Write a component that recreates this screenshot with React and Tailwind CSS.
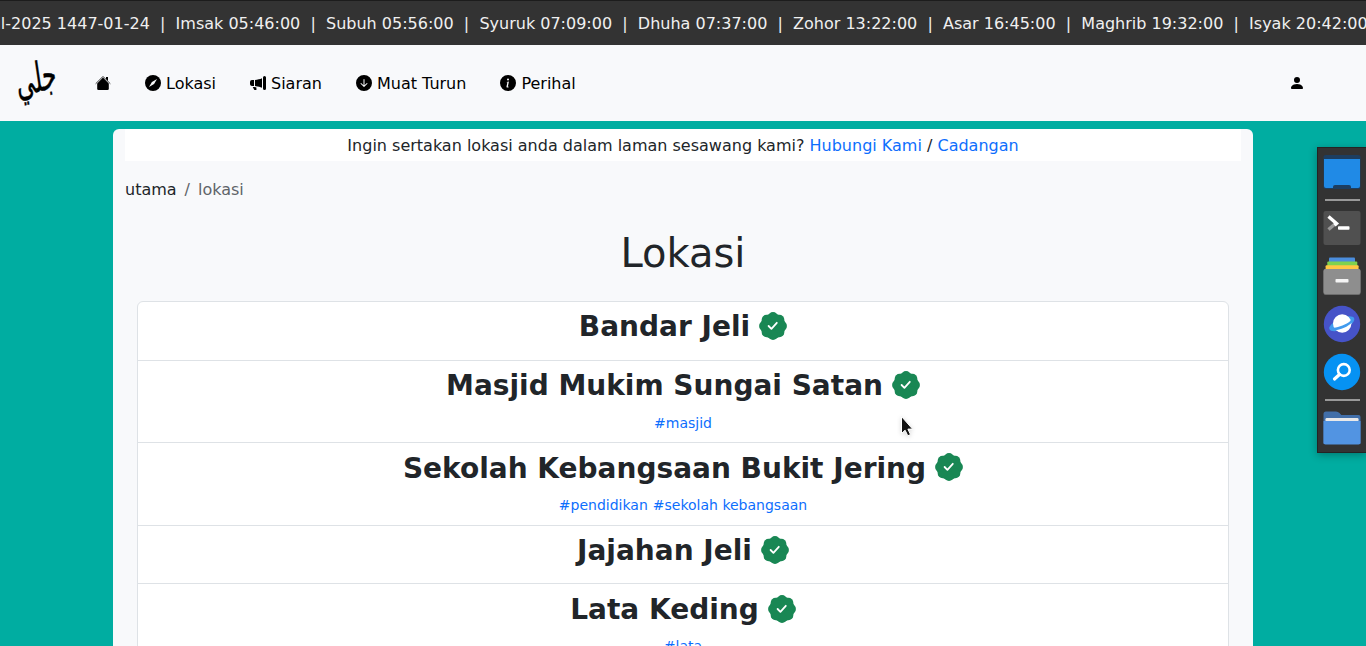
import { BsMegaphoneFill, BsArrowDownCircleFill, BsInfoCircleFill, BsPersonFill } from "react-icons/bs";

const prayerTimes =
  "ul-2025 1447-01-24  |  Imsak 05:46:00  |  Subuh 05:56:00  |  Syuruk 07:09:00  |  Dhuha 07:37:00  |  Zohor 13:22:00  |  Asar 16:45:00  |  Maghrib 19:32:00  |  Isyak 20:42:00";

const places = [
  { name: "Bandar Jeli", tags: [] },
  { name: "Masjid Mukim Sungai Satan", tags: ["#masjid"] },
  { name: "Sekolah Kebangsaan Bukit Jering", tags: ["#pendidikan", "#sekolah kebangsaan"] },
  { name: "Jajahan Jeli", tags: [] },
  { name: "Lata Keding", tags: ["#lata"] },
];

const lobes = [
  [14, 5],
  [20.400, 7.600],
  [23, 14],
  [20.400, 20.400],
  [14, 23],
  [7.600, 20.400],
  [5, 14],
  [7.600, 7.600],
];

function VerifiedBadge() {
  return (
    <svg className="-mt-0.5" width="28" height="28" viewBox="0 0 28 28">
      <g fill="#198754">
        <circle cx="14" cy="14" r="12.600" />
        {lobes.map(([x, y]) => (
          <circle key={`${x}-${y}`} cx={x} cy={y} r="4.900" />
        ))}
      </g>
      <path d="m9.600 14 2.800 2.800 5.400-6" fill="none" stroke="#fff" strokeWidth="1.800" strokeLinecap="round" strokeLinejoin="round" />
    </svg>
  );
}

function HouseIcon() {
  return (
    <svg width="16" height="16" viewBox="0 0 16 16">
      <path d="M8 2.600l5.800 5.900v5.200a1.300 1.300 0 0 1-1.300 1.300h-9a1.300 1.300 0 0 1-1.300-1.300V8.500z" />
      <path d="M11 1.900h2V6l-2-2z" />
      <path d="M.900 8.500 7.400 2q.600-.600 1.200 0l6.500 6.500" fill="none" stroke="#000" strokeOpacity=".75" strokeWidth="1" strokeLinecap="round" />
    </svg>
  );
}

function CompassIcon() {
  return (
    <svg width="16" height="16" viewBox="0 0 16 16">
      <circle cx="8" cy="8" r="8" fill="currentColor" />
      <path d="M12 4 9.1 9.1 4 12 6.9 6.9Z" fill="#f8f9fa" />
    </svg>
  );
}

function Logo() {
  return (
    <svg className="mr-[39px] h-[50px] w-10 overflow-visible" viewBox="0 0 40 50">
      <text
        direction="rtl"
        textAnchor="middle"
        fontFamily="'DejaVu Sans', sans-serif"
        fontSize="28"
        stroke="#000"
        strokeWidth="0.300"
        transform="translate(22 34) skewY(-14) skewX(8) scale(0.8 1.5)"
      >
        جلي
      </text>
    </svg>
  );
}

function NavItem({ icon, children }) {
  return (
    <a className="flex items-center gap-[5px]">
      {icon}
      <span className="pt-px">{children}</span>
    </a>
  );
}

function Dock() {
  return (
    <aside className="absolute top-[147px] left-[1317px] flex h-[306px] w-[49px] flex-col items-center border border-r-0 border-[#242424] bg-[#333] shadow-[0_2px_8px_rgba(0,0,0,0.3)]">
      <svg width="48" height="304" viewBox="1318 148 48 304">
        <rect x="1323.5" y="155" width="37" height="34" rx="2" fill="#1d3e60" />
        <path d="M1324 159h36v27q0 2-2 2h-32q-2 0-2-2z" fill="#208ae6" />
        <path d="M1333 188v-1q0-2 2-2h14q2 0 2 2v1z" fill="#1d3e60" />
        <path d="M1325 200h35" stroke="#999" strokeWidth="2" />
        <rect x="1323.5" y="211" width="37" height="34" rx="2" fill="#505050" />
        <path d="m1328.500 229.500 6.500-5.500" stroke="#999" strokeWidth="3.400" />
        <path d="m1328.500 216.500 8 7-2 1.800" fill="none" stroke="#fff" strokeWidth="3.400" />
        <rect x="1338" y="226.300" width="11.500" height="3.500" rx=".8" fill="#fff" />
        <rect x="1329" y="257.500" width="26" height="8" rx="1" fill="#4b8ddd" />
        <rect x="1327.300" y="261.500" width="30" height="8" rx="1" fill="#7ed24e" />
        <rect x="1325.600" y="265.200" width="33" height="8" rx="1" fill="#ffc843" />
        <rect x="1323.500" y="269" width="37" height="26" rx="2" fill="#6d6d6d" />
        <rect x="1323.500" y="269" width="37" height="25" rx="2" fill="#8e8e8e" />
        <rect x="1335.500" y="279" width="13" height="3.500" rx=".8" fill="#f4f4f4" />
        <circle cx="1342" cy="324" r="18.200" fill="#4653c8" />
        <ellipse cx="1341.800" cy="323.800" rx="13.500" ry="5.500" transform="rotate(-24 1341.800 323.800)" fill="#419bee" />
        <circle cx="1342.200" cy="323.500" r="9.200" fill="#fff" />
        <path d="M1329.300 327.300c3 2 13-1 19.500-5q1.800-1.300 2.200-2.500l3-1c-1.500 5-8 9-15 10.800-4 1-8.500.7-9.700-2.300z" fill="#419bee" />
        <circle cx="1342" cy="372" r="18.200" fill="#0692f3" />
        <circle cx="1343.800" cy="370" r="5.900" fill="none" stroke="#fff" strokeWidth="2.600" />
        <path d="m1339.500 374.500-5 4.500" stroke="#fff" strokeWidth="3.200" strokeLinecap="round" />
        <path d="M1325 400h35" stroke="#999" strokeWidth="2" />
        <path d="M1323.500 444v-30q0-2.500 2.500-2.500h10q2 0 3.500 1.600l1.800 1.900h17.200q2 0 2 2v27z" fill="#426fa9" />
        <rect x="1325.500" y="418" width="33" height="6" rx="1.200" fill="#e9e9e9" />
        <path d="M1323.500 421h37v21.500q0 2-2 2h-33q-2 0-2-2z" fill="#5294e2" />
      </svg>
    </aside>
  );
}

export default function App() {
  return (
    <div className="relative h-[646px] w-full overflow-hidden bg-[#00ada1] text-base text-[#212529] [font-family:'DejaVu_Sans',sans-serif]">
      <div className="flex h-[45px] items-center overflow-hidden border-t border-[#1c1c1c] bg-[#333] pt-0.5 text-[#f0f0f0]">
        <div className="-ml-[9.300px] whitespace-pre">{prayerTimes}</div>
      </div>

      <nav className="flex h-[76px] items-center bg-[#f8f9fb] pr-[61px] pl-4 text-black">
        <Logo />
        <div className="flex flex-1 items-center gap-[34px]">
          <HouseIcon />
          <NavItem icon={<CompassIcon />}>Lokasi</NavItem>
          <NavItem icon={<BsMegaphoneFill size={16} />}>Siaran</NavItem>
          <NavItem icon={<BsArrowDownCircleFill size={16} />}>Muat Turun</NavItem>
          <NavItem icon={<BsInfoCircleFill size={16} />}>Perihal</NavItem>
        </div>
        <BsPersonFill size={16} />
      </nav>

      <main className="mx-auto mt-2 h-[600px] w-[1140px] rounded-md bg-[#f8f9fb] px-3">
        <div className="h-8 bg-white pt-[5px] text-center leading-6">
          Ingin sertakan lokasi anda dalam laman sesawang kami? <a className="text-[#0d6efd]">Hubungi Kami</a> /{" "}
          <a className="text-[#0d6efd]">Cadangan</a>
        </div>
        <div className="mt-[17px] flex gap-2 leading-6">
          <a>utama</a>
          <span className="text-[#5f6469]">/</span>
          <span className="text-[#5f6469]">lokasi</span>
        </div>
        <h1 className="mt-[27px] text-center text-[40px] leading-[48px]">Lokasi</h1>
        <ul className="mx-3 mt-6 rounded-md border border-[#dee2e6] bg-white">
          {places.map((place) => (
            <li key={place.name} className="border-b border-[#dee2e6] py-2 text-center">
              <h3 className="mb-2 flex h-[33.600px] items-center justify-center gap-[9px] pt-[0.800px] text-[28px] leading-[33.600px] font-bold">
                {place.name}
                <VerifiedBadge />
              </h3>
              {place.tags.length > 0 && (
                <div className="flex h-6 items-center justify-center gap-[5px] pt-[0.800px] text-[14px] leading-6 text-[#0d6efd]">
                  {place.tags.map((tag) => (
                    <a key={tag}>{tag}</a>
                  ))}
                </div>
              )}
            </li>
          ))}
        </ul>
      </main>

      <Dock />

      <svg className="absolute top-[415px] left-[900px] drop-shadow-sm" width="15" height="23" viewBox="0 0 15 23">
        <path d="M1.500 1.500v17l3.600-3.300 2.700 5.600 2.700-1.300-2.600-5.400h4.700z" fill="#111" stroke="#fff" strokeWidth="1" />
      </svg>
    </div>
  );
}
